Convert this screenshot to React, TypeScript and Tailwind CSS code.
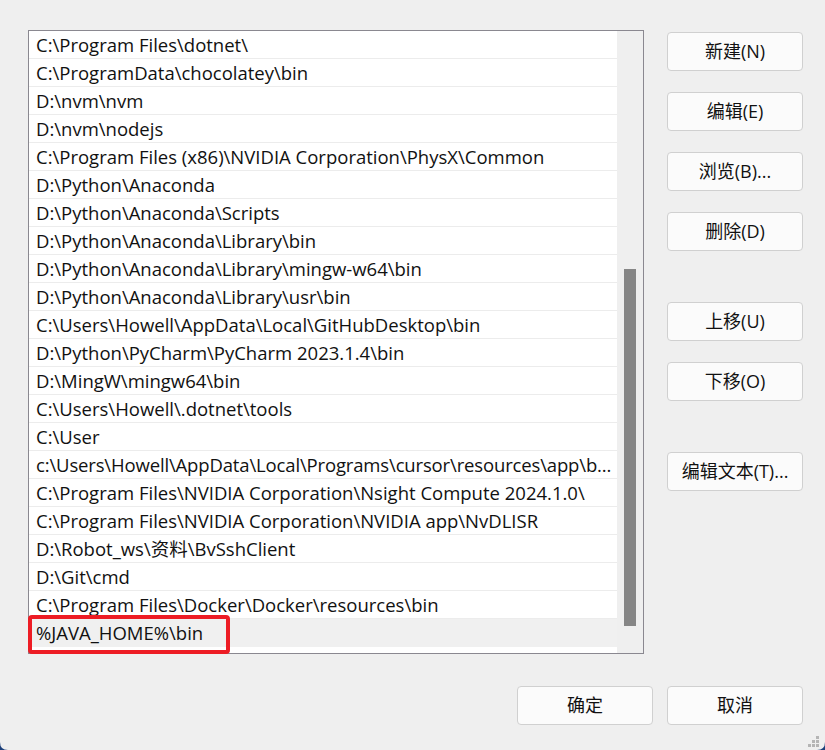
const paths = [
  "C:\\Program Files\\dotnet\\",
  "C:\\ProgramData\\chocolatey\\bin",
  "D:\\nvm\\nvm",
  "D:\\nvm\\nodejs",
  "C:\\Program Files (x86)\\NVIDIA Corporation\\PhysX\\Common",
  "D:\\Python\\Anaconda",
  "D:\\Python\\Anaconda\\Scripts",
  "D:\\Python\\Anaconda\\Library\\bin",
  "D:\\Python\\Anaconda\\Library\\mingw-w64\\bin",
  "D:\\Python\\Anaconda\\Library\\usr\\bin",
  "C:\\Users\\Howell\\AppData\\Local\\GitHubDesktop\\bin",
  "D:\\Python\\PyCharm\\PyCharm 2023.1.4\\bin",
  "D:\\MingW\\mingw64\\bin",
  "C:\\Users\\Howell\\.dotnet\\tools",
  "C:\\User",
  "c:\\Users\\Howell\\AppData\\Local\\Programs\\cursor\\resources\\app\\b...",
  "C:\\Program Files\\NVIDIA Corporation\\Nsight Compute 2024.1.0\\",
  "C:\\Program Files\\NVIDIA Corporation\\NVIDIA app\\NvDLISR",
  "D:\\Robot_ws\\资料\\BvSshClient",
  "D:\\Git\\cmd",
  "C:\\Program Files\\Docker\\Docker\\resources\\bin",
];

const font = "font-['Open_Sans','Noto_Sans_CJK_SC',sans-serif]";

const Btn = ({ label, className = "" }: { label: string; className?: string }) => (
  <button
    className={`h-[39px] w-[136px] rounded-[4px] border border-[#d0d0d0] bg-[#fbfbfb] text-[18px] text-[#111] ${className}`}
  >
    {label}
  </button>
);

export default function App() {
  return (
    <div className={`relative h-[750px] w-[825px] overflow-hidden bg-[#efefef] ${font}`}>
      <div className="flex pl-[28px] pt-[30px]">
        {/* list */}
        <div className="flex h-[624px] w-[616px] border border-[#8a8890] bg-white">
          <div className="flex w-[588px] flex-col">
            {paths.map((p) => (
              <div
                key={p}
                className={`flex h-[28px] items-center whitespace-nowrap border-b border-[#ececec] pl-[7px] text-[18.5px] text-[#111] ${
                  p.endsWith("...") ? "tracking-[-0.15px]" : ""
                }`}
              >
                {p}
              </div>
            ))}
            <div className="relative flex h-[28px] items-center bg-[#f0f0f0] pl-[7px] text-[18.5px] text-[#111]">
              %JAVA_HOME%\bin
              <div className="absolute left-[-1px] top-[-4px] h-[39px] w-[202px] rounded-[4px] border-[4px] border-[#ed1c24]" />
            </div>
          </div>
          <div className="relative w-[26px] bg-[#efefef]">
            <div className="absolute left-[7px] top-[238px] h-[357px] w-[12px] bg-[#868686]" />
          </div>
        </div>

        {/* right buttons */}
        <div className="ml-[23px] flex flex-col pt-[2px]">
          <Btn label="新建(N)" />
          <Btn label="编辑(E)" className="mt-[21px]" />
          <Btn label="浏览(B)..." className="mt-[21px]" />
          <Btn label="删除(D)" className="mt-[21px]" />
          <Btn label="上移(U)" className="mt-[51px]" />
          <Btn label="下移(O)" className="mt-[21px]" />
          <Btn label="编辑文本(T)..." className="mt-[51px]" />
        </div>
      </div>

      <div className="mt-[32px] flex justify-end gap-[14px] pr-[22px]">
        <Btn label="确定" />
        <Btn label="取消" />
      </div>

      {/* window corners */}
      <svg className="absolute bottom-0 left-0" width="8" height="8" viewBox="0 0 8 8">
        <path d="M0 0 Q0 8 8 8 L0 8 Z" fill="#1c3f7a" />
      </svg>
      <svg className="absolute bottom-0 right-0" width="8" height="8" viewBox="0 0 8 8">
        <path d="M8 0 Q8 8 0 8 L8 8 Z" fill="#1c3f7a" />
      </svg>
      <svg className="absolute bottom-[2px] right-[5px]" width="12" height="12" viewBox="0 0 12 12">
        <g fill="#b5b5b5">
          <rect x="8" y="0" width="3" height="3" />
          <rect x="4" y="4" width="3" height="3" />
          <rect x="8" y="4" width="3" height="3" />
          <rect x="0" y="8" width="3" height="3" />
          <rect x="4" y="8" width="3" height="3" />
          <rect x="8" y="8" width="3" height="3" />
        </g>
      </svg>
    </div>
  );
}
